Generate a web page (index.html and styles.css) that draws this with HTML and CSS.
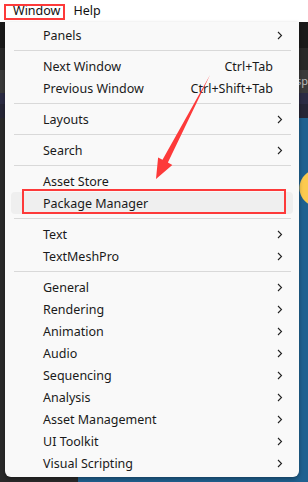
FILE: index.html
```html
<!DOCTYPE html>
<html lang="en">
<head>
  <meta charset="UTF-8">
  <meta name="viewport" content="width=device-width, initial-scale=1.0">
  <title>Window Menu</title>
  <link rel="stylesheet" href="styles.css">
</head>
<body>

  <div class="menubar">
    <span class="menubar-item active">Window<span class="mark"></span></span>
    <span class="menubar-item">Help</span>
  </div>

  <div class="workspace">
    <span class="backdrop-tab">sp</span>

    <div class="menu">
      <div class="row"><span class="label">Panels</span><span class="chev"></span></div>
      <div class="divider"></div>
      <div class="row"><span class="label">Next Window</span><span class="shortcut">Ctrl+Tab</span><span class="nochev"></span></div>
      <div class="row"><span class="label">Previous Window</span><span class="shortcut">Ctrl+Shift+Tab</span><span class="nochev"></span></div>
      <div class="divider"></div>
      <div class="row"><span class="label">Layouts</span><span class="chev"></span></div>
      <div class="divider"></div>
      <div class="row"><span class="label">Search</span><span class="chev"></span></div>
      <div class="divider"></div>
      <div class="row"><span class="label">Asset Store</span><span class="nochev"></span></div>
      <div class="row hover"><span class="label">Package Manager</span><span class="nochev"></span><span class="mark"></span></div>
      <div class="divider"></div>
      <div class="row"><span class="label">Text</span><span class="chev"></span></div>
      <div class="row"><span class="label">TextMeshPro</span><span class="chev"></span></div>
      <div class="divider"></div>
      <div class="row"><span class="label">General</span><span class="chev"></span></div>
      <div class="row"><span class="label">Rendering</span><span class="chev"></span></div>
      <div class="row"><span class="label">Animation</span><span class="chev"></span></div>
      <div class="row"><span class="label">Audio</span><span class="chev"></span></div>
      <div class="row"><span class="label">Sequencing</span><span class="chev"></span></div>
      <div class="row"><span class="label">Analysis</span><span class="chev"></span></div>
      <div class="row"><span class="label">Asset Management</span><span class="chev"></span></div>
      <div class="row"><span class="label">UI Toolkit</span><span class="chev"></span></div>
      <div class="row"><span class="label">Visual Scripting</span><span class="chev"></span></div>
    </div>

    <!-- annotation arrow pointing at Package Manager -->
    <svg class="arrow" width="308" height="460" viewBox="0 22 308 460">
      <polygon points="210,75 167.9,162.6 172.3,164.9 156,179 158.1,157.5 162.5,159.8" fill="#fd3a3a"/>
    </svg>
  </div>

</body>
</html>
```

FILE: styles.css
```css
* {
  box-sizing: border-box;
}

body {
  margin: 0;
  width: 308px;
  height: 482px;
  overflow: hidden;
  font-family: "Noto Sans", "Open Sans", sans-serif;
  font-size: 12.5px;
  color: #1a1a1a;
  background-color: #2a2a2a;
}

.menubar {
  height: 22px;
  background-color: #fff;
  display: flex;
  align-items: center;
  padding-left: 13px;
  gap: 13px;
  font-size: 12.5px;
  color: #111;
}

.menubar-item {
  position: relative;
  line-height: 22px;
}

.mark {
  position: absolute;
  border: 2px solid #fd3a3a;
  pointer-events: none;
}

.menubar-item .mark {
  left: -9px;
  right: -5px;
  top: 4px;
  bottom: 2px;
}

.workspace {
  position: relative;
  height: 460px;
  background:
    radial-gradient(circle at 318px 166px, #fcca4f 0 18px, transparent 19px),
    linear-gradient(#1f6190, #1f6190) 78px 96px / 100% 100% no-repeat,
    linear-gradient(to bottom, #1a1a1a 0 26px, #282828 26px 48px, #3a3a3a 48px 71px, #2c2c44 71px 82px, #262636 82px 96px) 0 0 / 100% 96px no-repeat,
    linear-gradient(to bottom, #1c1c1c 0 40px, #232323 40px 52px, #2a2a2a 52px) 0 0 / 100% 100% no-repeat;
}

.backdrop-tab {
  position: absolute;
  right: 0;
  top: 51px;
  font-size: 11px;
  color: #b8b8b8;
}

.menu {
  position: absolute;
  left: 5px;
  top: 0;
  width: 294px;
  height: 455px;
  padding: 2px 6px 3px;
  background-color: #f9f9f9;
  border-radius: 0 0 6px 6px;
  box-shadow: 0 2px 4px rgba(0, 0, 0, 0.35);
}

.row {
  position: relative;
  display: flex;
  align-items: center;
  height: 22px;
  padding: 0 10px 0 32px;
  border-radius: 4px;
}

.row.hover {
  background-color: #efefef;
}

.row.hover .mark {
  left: 11px;
  right: 7px;
  top: -3px;
  bottom: 0;
}

.label {
  flex: 1;
  white-space: nowrap;
}

.shortcut {
  margin-right: 4px;
  white-space: nowrap;
}

.chev,
.nochev {
  width: 6px;
  height: 9px;
}

.chev {
  background: url("data:image/svg+xml,%3Csvg xmlns='http://www.w3.org/2000/svg' width='6' height='9' viewBox='0 0 6 9'%3E%3Cpath d='M1 1l3.5 3.5L1 8' fill='none' stroke='%23222' stroke-width='1.1'/%3E%3C/svg%3E") no-repeat;
}

.divider {
  height: 1px;
  margin: 4px 2px 4px 3px;
  background-color: #d9d9d9;
}

.arrow {
  position: absolute;
  left: 0;
  top: 0;
  pointer-events: none;
}
```
